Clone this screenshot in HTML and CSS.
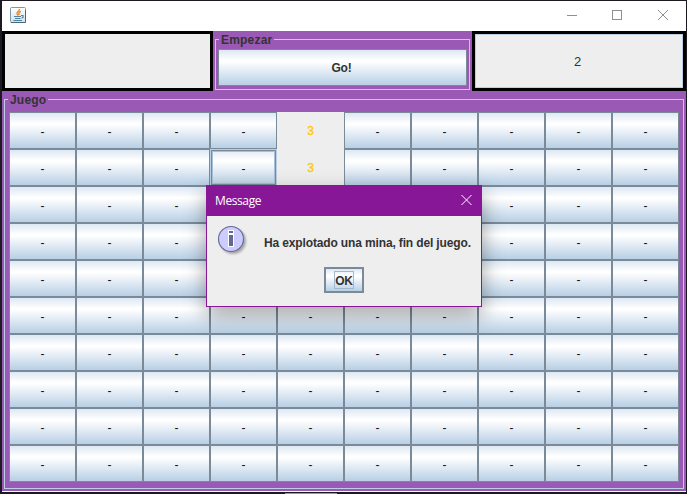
FILE: index.html
```
<!DOCTYPE html>
<html lang="es">
<head>
<meta charset="utf-8">
<title>Buscaminas</title>
<link rel="stylesheet" href="styles.css">
</head>
<body>
<div class="window">
  <header class="titlebar">
    <svg class="java" width="16" height="16" viewBox="0 0 16 16">
      <defs><linearGradient id="jb" x1="0" y1="0" x2="0" y2="1"><stop offset="0" stop-color="#fff"/><stop offset="1" stop-color="#d5dfe5"/></linearGradient></defs>
      <rect x=".5" y=".5" width="15" height="15" rx="1" fill="url(#jb)" stroke="#7f9aa9"/>
      <path d="M1 15.5H15.5V3" fill="none" stroke="#416b83"/>
      <path d="M9.500 2C10 4 6.500 4.500 7 6.500L8 8.500M11 4.500C8.500 5 8.500 6.500 9.300 8" fill="none" stroke="#ee8424" stroke-width="1.400"/>
      <path d="M4 9.500H11M5 11.500H10.500M3.500 13.500H12M11 8.500H13V10.500L11.500 11" fill="none" stroke="#5382a1" stroke-width="1.200"/>
    </svg>
    <svg class="controls" width="104" height="12" viewBox="0 0 104 12" fill="none" stroke="#8f8f8f">
      <path d="M1 5.500H11"/><rect x="46.500" y=".5" width="9" height="9"/><path d="M92 0L102 10M102 0L92 10"/>
    </svg>
  </header>
  <section class="top">
    <div class="box"></div>
    <div class="group start">
      <span class="legend">Empezar</span>
      <button class="metal go">Go!</button>
    </div>
    <div class="box"><div class="counter">2</div></div>
  </section>
  <section class="group game">
    <span class="legend">Juego</span>
    <div class="grid" id="grid"></div>
  </section>
</div>
<div class="taskmark"></div>
<div class="dialog">
  <header class="dialog-title"><span>Message</span>
    <svg width="11" height="11" viewBox="0 0 11 11" fill="none" stroke="#fff"><path d="M.5 0L10.500 10M10.500 0L.5 10"/></svg>
  </header>
  <div class="message">
    <svg width="32" height="32" viewBox="0 0 32 32">
      <defs><filter id="soft"><feGaussianBlur stdDeviation="1.300"/></filter></defs>
      <circle cx="16" cy="16" r="13" fill="#888" opacity=".7" filter="url(#soft)"/>
      <circle cx="14" cy="14" r="12.500" fill="#ccf" stroke="#669" stroke-width="1.100"/>
      <path d="M11 5H17V9H11ZM11 9H17V22H11Z" fill="#fff"/>
      <path d="M12 6H16V8H12ZM12 10H16V21H12Z" fill="#669"/>
    </svg>
    <span>Ha explotado una mina, fin del juego.</span>
  </div>
  <button class="metal ok"><span>OK</span></button>
</div>
<script src="board.js"></script>
</body>
</html>
```
FILE: styles.css
```
* { box-sizing: border-box; }
body {
  margin: 0;
  width: 687px;
  height: 494px;
  overflow: hidden;
  padding: 1px 1px 0 2px;
  background: #1c1a20;
  font: bold 12px "Liberation Sans", Arial, sans-serif;
  color: #333;
}
.window {
  width: 684px;
  height: 491px;
  background: #9b59b6;
  border-bottom: 1px solid #fff;
}
.titlebar {
  height: 30px;
  background: #fff;
  display: flex;
  align-items: center;
  justify-content: space-between;
  padding: 0 16px 0 8px;
}
.java { margin-bottom: 2px; }
.top {
  display: grid;
  grid-template-columns: 211px 259px 214px;
  height: 60px;
}
.box {
  border: 3px solid #000;
  background: #eee;
}
.counter {
  height: 100%;
  border: 1px solid #b8cfe5;
  display: flex;
  align-items: center;
  justify-content: center;
  padding-right: 3px;
  font-weight: normal;
  font-size: 13px;
}
.group {
  position: relative;
  border: 1px solid #b8cfe5;
}
.legend {
  position: absolute;
  top: -7px;
  left: 3px;
  padding: 0 2px;
  line-height: 15px;
  letter-spacing: .2px;
  background: #9b59b6;
}
.start {
  margin: 8px 2px 1px;
  padding: 9px 2px 2px;
}
.metal {
  display: flex;
  align-items: center;
  justify-content: center;
  margin: 0;
  padding: 0;
  border: 1px solid #7a8a99;
  background: linear-gradient(#dde8f3, #fff 30%, #fff 33%, #b8cfe5);
  font: inherit;
  color: #333;
}
.go {
  width: 100%;
  height: 37px;
  padding-right: 2px;
  letter-spacing: -.2px;
}
.game {
  margin: 8px 2px 0;
  height: 390px;
  padding: 12px 4px;
}
.grid {
  display: grid;
  grid-template-columns: repeat(10, 67px);
  grid-auto-rows: 37px;
}
.cell {
  padding-top: 2px;
  font-weight: normal;
  color: #111;
}
.cell.open {
  border: 0;
  padding: 0;
  background: #eee;
  color: #ffc800;
  -webkit-text-stroke: .3px #ffc800;
}
.cell.focus {
  border: 0;
  box-shadow: inset 0 0 0 1px #b8cfe5, inset 0 0 0 2px #7a8a99, inset 0 0 0 3px #a9c0d6;
}
.taskmark {
  width: 52px;
  height: 1px;
  margin: 1px 0 0 283px;
  background: #999;
}
.dialog {
  position: absolute;
  left: 206px;
  top: 185px;
  width: 276px;
  height: 122px;
  border: 1px solid #881798;
  background: #eee;
  box-shadow: 0 8px 20px rgba(0, 0, 0, .36);
}
.dialog-title {
  height: 30px;
  background: #881798;
  color: #fff;
  font: 12px "Open Sans", "Noto Sans", sans-serif;
  letter-spacing: -.4px;
  display: flex;
  align-items: center;
  justify-content: space-between;
  padding: 0 9px 1px 8px;
}
.message {
  display: flex;
  margin: 9px 0 0 10px;
  height: 32px;
}
.message span {
  margin-left: 15px;
  padding-top: 11px;
  line-height: 14px;
  white-space: nowrap;
  letter-spacing: -.14px;
}
.ok {
  width: 40px;
  height: 26px;
  margin: 10px 0 0 117px;
  border-width: 2px;
}
.ok span {
  width: 20px;
  height: 18px;
  line-height: 18px;
  letter-spacing: -.3px;
  border: 1px solid #a3b8cc;
  display: flex;
  justify-content: center;
}
```
FILE: board.js
```
const grid = document.getElementById("grid");
const opened = { 4: "3", 14: "3" };
for (let i = 0; i < 100; i++) {
  const row = Math.floor(i / 10), col = i % 10;
  // cells behind the dialog carry no label
  const covered = row >= 2 && row <= 4 && col >= 3 && col <= 6;
  const cell = document.createElement("button");
  cell.className = "metal cell";
  cell.textContent = covered ? "" : opened[i] || "-";
  if (opened[i]) cell.classList.add("open");
  if (i === 13) cell.classList.add("focus");
  grid.append(cell);
}
```
